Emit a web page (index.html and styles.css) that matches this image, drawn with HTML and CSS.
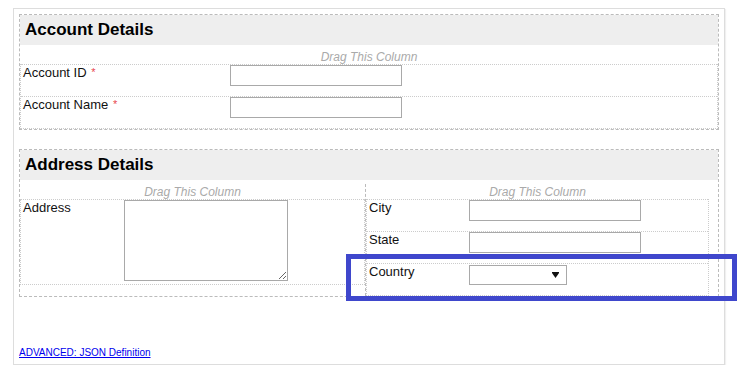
FILE: index.html
```html
<!DOCTYPE html>
<html lang="en">
<head>
    <meta charset="UTF-8">
    <title>Form Layout</title>
    <link rel="stylesheet" href="styles.css">
</head>
<body>
    <div class="panel">
        <div class="section">
            <div class="section-title">Account Details</div>
            <div class="columns">
                <div class="column">
                    <div class="drag">Drag This Column</div>
                    <div class="rows">
                        <div class="row">
                            <label class="label">Account ID <span class="req">*</span></label>
                            <div class="field"><input type="text" class="text-input"></div>
                        </div>
                        <div class="row">
                            <label class="label">Account Name <span class="req">*</span></label>
                            <div class="field"><input type="text" class="text-input"></div>
                        </div>
                    </div>
                </div>
            </div>
        </div>

        <div class="section">
            <div class="section-title">Address Details</div>
            <div class="columns">
                <div class="column column-left">
                    <div class="drag">Drag This Column</div>
                    <div class="rows">
                        <div class="row row-tall">
                            <label class="label">Address</label>
                            <div class="field"><textarea class="text-area"></textarea></div>
                        </div>
                    </div>
                </div>
                <div class="column column-right">
                    <div class="drag">Drag This Column</div>
                    <div class="rows">
                        <div class="row">
                            <label class="label">City</label>
                            <div class="field"><input type="text" class="text-input"></div>
                        </div>
                        <div class="row">
                            <label class="label">State</label>
                            <div class="field"><input type="text" class="text-input"></div>
                        </div>
                        <div class="row">
                            <label class="label">Country</label>
                            <div class="field">
                                <div class="select-wrap">
                                    <select class="select-input"><option></option></select>
                                    <svg class="select-arrow" width="7" height="6" viewBox="0 0 7 6"><path d="M0 0H7V1L3.5 6L0 1Z" fill="#111"/></svg>
                                </div>
                            </div>
                        </div>
                    </div>
                </div>
            </div>
        </div>

        <a href="#" class="json-link">ADVANCED: JSON Definition</a>
    </div>

    <div class="highlight"></div>
</body>
</html>
```

FILE: styles.css
```css
body {
    font-family: 'Liberation Sans', Arial, sans-serif;
    font-size: 13px;
    color: #111;
    background-color: #fff;
    margin: 0;
    padding: 8px 0 0 13px;
}

.panel {
    box-sizing: border-box;
    width: 712px;
    height: 357px;
    padding: 5px;
    border: 1px solid #ddd;
    box-shadow: 1px 1px 1px rgba(0, 0, 0, 0.06);
    display: flex;
    flex-direction: column;
}

.section {
    border: 1px dashed #bbb;
    margin-bottom: 19px;
}

.section-title {
    height: 30px;
    line-height: 30px;
    padding-left: 5px;
    background-color: #eee;
    font-size: 17px;
    font-weight: bold;
    color: #000;
}

.columns {
    display: flex;
    padding-top: 5px;
}

.column {
    flex: 1;
}

.column-left {
    flex: 0 0 345px;
}

.column-right {
    border-left: 1px dashed #bbb;
    padding-right: 9px;
    margin-top: -1px;
    padding-top: 1px;
}

.drag {
    height: 14px;
    line-height: 14px;
    text-align: center;
    font-size: 12px;
    font-style: italic;
    color: #aaa;
}

.rows {
    border: 1px dotted #ccc;
    border-top: none;
}

.row {
    display: flex;
    height: 31px;
    border-top: 1px dotted #ccc;
}

.row-tall {
    height: 84px;
}

.label {
    flex: 0 0 30%;
    padding-left: 2px;
    box-sizing: border-box;
    line-height: 15px;
}

.req {
    color: #e8474f;
    font-size: 11px;
    vertical-align: 1px;
    margin-left: 1px;
}

.field {
    flex: 1;
}

.text-input {
    box-sizing: border-box;
    width: 172px;
    height: 21px;
    margin: 0;
    border: 1px solid #a9a9a9;
    padding: 2px 4px;
}

.text-area {
    box-sizing: border-box;
    display: block;
    width: 164px;
    height: 81px;
    margin: 0;
    border: 1px solid #a9a9a9;
    resize: both;
}

.select-wrap {
    position: relative;
    width: 98px;
    margin-top: 1px;
}

.select-input {
    box-sizing: border-box;
    display: block;
    width: 98px;
    height: 20px;
    margin: 0;
    border: 1px solid #a9a9a9;
    border-radius: 0;
    background-color: #fff;
    -webkit-appearance: none;
    appearance: none;
}

.select-arrow {
    position: absolute;
    right: 8px;
    top: 7px;
}

.json-link {
    margin-top: auto;
    font-size: 10px;
    line-height: 12px;
    color: #00e;
    align-self: flex-start;
}

.highlight {
    position: absolute;
    left: 346px;
    top: 254px;
    width: 381px;
    height: 37px;
    border: 5px solid #3f47cc;
}
```
